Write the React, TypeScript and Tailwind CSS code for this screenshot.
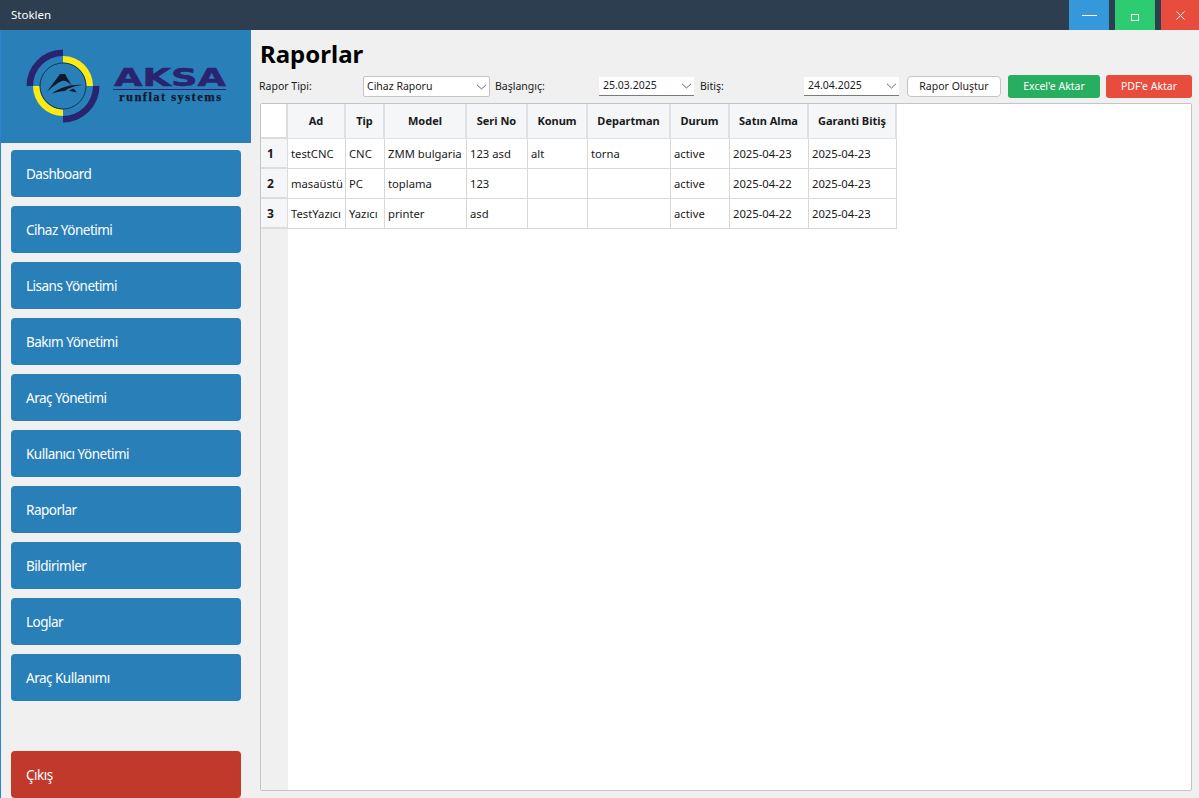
const menu = [
  "Dashboard",
  "Cihaz Yönetimi",
  "Lisans Yönetimi",
  "Bakım Yönetimi",
  "Araç Yönetimi",
  "Kullanıcı Yönetimi",
  "Raporlar",
  "Bildirimler",
  "Loglar",
  "Araç Kullanımı",
];

const columns = [
  { name: "Ad", width: "w-[58px]" },
  { name: "Tip", width: "w-[39px]" },
  { name: "Model", width: "w-[82px]" },
  { name: "Seri No", width: "w-[61px]" },
  { name: "Konum", width: "w-[60px]" },
  { name: "Departman", width: "w-[83px]" },
  { name: "Durum", width: "w-[59px]" },
  { name: "Satın Alma", width: "w-[79px]" },
  { name: "Garanti Bitiş", width: "w-[88px]" },
];

const rows = [
  ["testCNC", "CNC", "ZMM bulgaria", "123 asd", "alt", "torna", "active", "2025-04-23", "2025-04-23"],
  ["masaüstü", "PC", "toplama", "123", "", "", "active", "2025-04-22", "2025-04-23"],
  ["TestYazıcı", "Yazıcı", "printer", "asd", "", "", "active", "2025-04-22", "2025-04-23"],
];

function Chevron() {
  return (
    <svg width="11" height="6" viewBox="0 0 11 6" fill="none" className="shrink-0">
      <path d="M1 0.8 L5.5 5 L10 0.8" stroke="#6b6b6b" strokeWidth="1" />
    </svg>
  );
}

function Logo() {
  return (
    <svg width="220" height="80" viewBox="0 0 220 80" className="block">
      {/* yellow quarter rings */}
      <path d="M53 11 A30 30 0 0 1 83 41 L76.5 41 A23.5 23.5 0 0 0 53 17.5 Z" fill="#fdea14" />
      <path d="M23 41 L29.5 41 A23.5 23.5 0 0 0 53 64.5 L53 71 A30 30 0 0 1 23 41 Z" fill="#fdea14" />
      {/* navy outer quarters */}
      <path d="M53 4.5 A36.5 36.5 0 0 0 16.5 41 L23 41 A30 30 0 0 1 53 11 Z" fill="#2a2370" />
      <path d="M89.5 41 A36.5 36.5 0 0 1 53 77.5 L53 71 A30 30 0 0 0 83 41 Z" fill="#2a2370" />
      <circle cx="53" cy="41" r="23" fill="none" stroke="#10203a" strokeWidth="0.8" />
      {/* arrow mark */}
      <path d="M36.7 47 L50 29 L55 29 L62 41 C59 37 55 35 52 36 C47 38 42 42 36.7 47 Z" fill="#10182c" />
      <path d="M42 48.5 C50 42.5 62 39 73 40 C66 40.5 58 43 55 46 C51 46 47 47 42 48.5 Z" fill="#10182c" />
      <path d="M59 45.5 L63.5 43.5 L67 47.5 L62 46.5 Z" fill="#10182c" />
      <text
        x="104"
        y="40.5"
        fontFamily="'DejaVu Sans', sans-serif"
        fontWeight="700"
        fontSize="24.5"
        fill="#2a2370"
        stroke="#2a2370"
        strokeWidth="0.5"
        textLength="112"
        lengthAdjust="spacingAndGlyphs"
      >
        AKSA
      </text>
      <rect x="103" y="44" width="113" height="1" fill="#2a2370" />
      <text
        x="109"
        y="56"
        fontFamily="'Liberation Serif', serif"
        fontWeight="700"
        fontSize="12.5"
        fill="#10182c"
        stroke="#10182c"
        strokeWidth="0.25"
        textLength="102"
        lengthAdjust="spacing"
      >
        runflat systems
      </text>
    </svg>
  );
}

export default function App() {
  return (
    <div className="w-[1199px] h-[798px] overflow-hidden flex flex-col bg-[#f0f0f0] font-['Noto_Sans','Open_Sans',sans-serif] text-[10.5px] text-[#1a1a1a]">
      {/* title bar */}
      <div className="h-[30px] shrink-0 bg-[#2c3e50] flex items-center justify-between">
        <span className="pl-[11px] text-[11.5px] text-white">Stoklen</span>
        <div className="flex h-full gap-[6px]">
          <div className="w-[40px] bg-[#3498db] flex items-center justify-center">
            <div className="w-[15px] h-px bg-white" />
          </div>
          <div className="w-[40px] bg-[#2ecc71] flex items-center justify-center">
            <div className="w-[8px] h-[7px] mt-[4px] border border-white" />
          </div>
          <div className="w-[38px] bg-[#e74c3c] flex items-center justify-center">
            <svg width="9" height="9" viewBox="0 0 9 9" className="mt-[1px]">
              <path d="M0.5 0.5 L8.5 8.5 M8.5 0.5 L0.5 8.5" stroke="white" strokeWidth="1" />
            </svg>
          </div>
        </div>
      </div>

      <div className="flex flex-1 min-h-0">
        {/* sliver of the desktop behind the window */}
        <div className="w-px shrink-0 bg-[#2d83cf]" />

        {/* sidebar */}
        <aside className="w-[250px] shrink-0 flex flex-col">
          <div className="h-[113px] shrink-0 bg-[#2980b9] flex items-center pl-[9px] pb-[3px]">
            <Logo />
          </div>
          <nav className="flex flex-1 flex-col gap-[9px] px-[10px] pt-[7px]">
            {menu.map((item) => (
              <div
                key={item}
                className="h-[47px] shrink-0 rounded-[4px] bg-[#2980b9] flex items-center pl-[15px] pt-[2px] text-[13.5px] tracking-[-0.5px] text-white"
              >
                {item}
              </div>
            ))}
            <div className="mt-auto h-[47px] shrink-0 rounded-[4px] bg-[#c0392b] flex items-center pl-[15px] pt-[2px] text-[13.5px] tracking-[-0.5px] text-white">
              Çıkış
            </div>
          </nav>
        </aside>

        {/* content */}
        <main className="flex-1 min-w-0 flex flex-col pl-[9px] pr-[7px]">
          <h1 className="h-[44px] shrink-0 pt-[5px] text-[24px] leading-[38px] font-bold text-black">Raporlar</h1>

          <div className="h-[24px] shrink-0 flex items-center">
            <span className="w-[104px] shrink-0 -ml-px pt-px">Rapor Tipi:</span>
            <div className="w-[127px] h-[21px] shrink-0 flex items-center justify-between pl-[3px] pr-[2px] pt-px bg-white border border-[#c4c4c4] rounded-[2px]">
              <span>Cihaz Raporu</span>
              <Chevron />
            </div>
            <span className="w-[109px] shrink-0 pl-[5px] pt-px">Başlangıç:</span>
            <div className="w-[95px] h-[19px] shrink-0 flex items-center justify-between pl-[4px] pr-[2px] bg-white border-b border-[#7a7a7a]">
              <span>25.03.2025</span>
              <Chevron />
            </div>
            <span className="w-[110px] shrink-0 pl-[6px] pt-px">Bitiş:</span>
            <div className="w-[95px] h-[19px] shrink-0 flex items-center justify-between pl-[4px] pr-[2px] bg-white border-b border-[#7a7a7a]">
              <span>24.04.2025</span>
              <Chevron />
            </div>
            <div className="w-[94px] h-[21px] shrink-0 ml-[8px] flex items-center justify-center pt-px bg-white border border-[#c4c4c4] rounded-[4px]">
              Rapor Oluştur
            </div>
            <div className="w-[92px] h-[23px] shrink-0 ml-[7px] flex items-center justify-center pt-px bg-[#27ae60] rounded-[3px] text-white">
              Excel'e Aktar
            </div>
            <div className="w-[86px] h-[23px] shrink-0 ml-[6px] flex items-center justify-center pt-px bg-[#e74c3c] rounded-[3px] text-white">
              PDF'e Aktar
            </div>
          </div>

          {/* table view */}
          <div className="mt-[5px] mb-[7px] flex-1 min-h-0 flex bg-white border border-[#c4c4c4] rounded-[2px] overflow-hidden">
            <div className="w-[27px] shrink-0 bg-[#f0f0f0] flex flex-col">
              <div className="h-[35px] shrink-0 bg-white border-r-2 border-b-2 border-[#dcdcdc]" />
              {["1", "2", "3"].map((n) => (
                <div
                  key={n}
                  className="h-[30px] shrink-0 bg-[#f4f6f8] border-b-2 border-r border-[#dcdcdc] flex items-center pl-[6px] pt-px text-[12px] font-bold"
                >
                  {n}
                </div>
              ))}
            </div>
            <div className="flex-1 min-w-0">
              <div className="flex h-[35px]">
                {columns.map((col) => (
                  <div
                    key={col.name}
                    className={`${col.width} shrink-0 bg-[#f4f6f8] border-r-2 border-b border-[#dfe1e5] flex items-center justify-center pt-px text-[11px] font-bold`}
                  >
                    {col.name}
                  </div>
                ))}
              </div>
              {rows.map((row) => (
                <div key={row[0]} className="flex h-[30px]">
                  {row.map((cell, i) => (
                    <div
                      key={columns[i].name}
                      className={`${columns[i].width} shrink-0 border-r border-b border-[#d8d8d8] flex items-center pl-[3px] pt-px text-[11.25px] whitespace-nowrap overflow-hidden`}
                    >
                      {cell}
                    </div>
                  ))}
                </div>
              ))}
            </div>
          </div>
        </main>
      </div>
    </div>
  );
}
